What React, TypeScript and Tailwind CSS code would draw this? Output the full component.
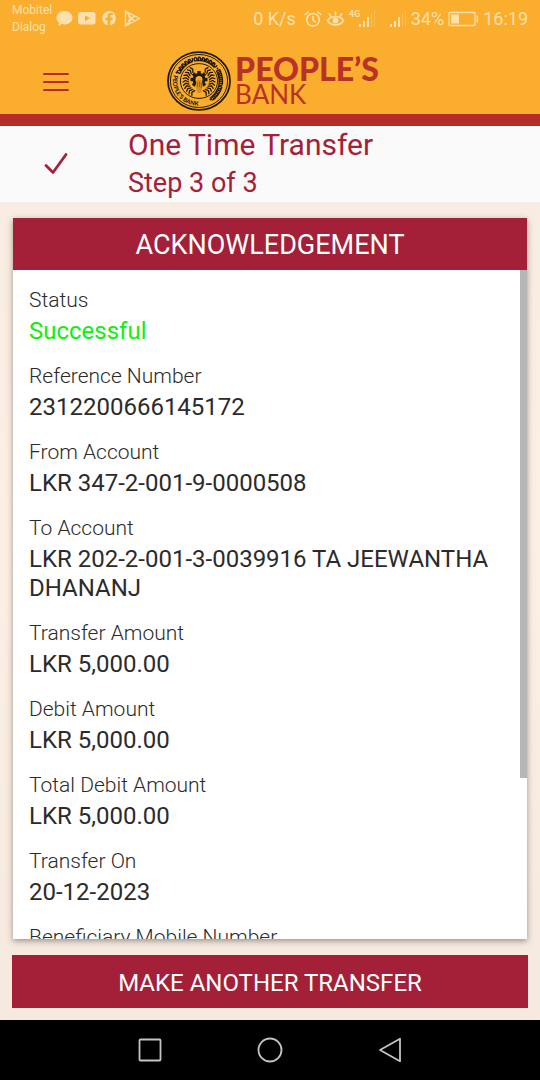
import React from "react";

type Entry = { label: string; value?: string; tone?: "success" };

const entries: Entry[] = [
  { label: "Status", value: "Successful", tone: "success" },
  { label: "Reference Number", value: "2312200666145172" },
  { label: "From Account", value: "LKR 347-2-001-9-0000508" },
  { label: "To Account", value: "LKR 202-2-001-3-0039916 TA JEEWANTHA DHANANJ" },
  { label: "Transfer Amount", value: "LKR 5,000.00" },
  { label: "Debit Amount", value: "LKR 5,000.00" },
  { label: "Total Debit Amount", value: "LKR 5,000.00" },
  { label: "Transfer On", value: "20-12-2023" },
  { label: "Beneficiary Mobile Number" },
];

function NotificationIcons() {
  return (
    <svg width="86" height="20" viewBox="0 0 86 20" aria-hidden="true">
      <g fill="currentColor">
        <path d="M8.500 2C13.200 2 16.500 4.900 16.500 8.700S13.200 15.400 8.500 15.400C7.500 15.400 6.600 15.300 5.800 15L2.400 17L3 13.600C1.400 12.400 0.500 10.700 0.500 8.700C0.500 4.900 3.800 2 8.500 2Z" />
        <path fillRule="evenodd" d="M24.500 3H37Q39.500 3 39.500 5.500V13Q39.500 15.500 37 15.500H24.500Q22 15.500 22 13V5.500Q22 3 24.500 3ZM29 6.300V12.200L34 9.250Z" />
        <path d="M53.500 2a7.300 7.300 0 0 0-2 14.300v-5h-2V8.800h2V7.500c0-2.500 1.300-3.600 3.400-3.600l2 .2v2h-1.200c-1 0-1.400.5-1.400 1.400v1.300h2.500l-.4 2.500h-2.100v5A7.300 7.300 0 0 0 53.500 2Z" />
      </g>
      <path d="M69.500 2L83.500 9.500L69.500 17ZM69.500 2L78.500 12.200M69.500 17L78.500 6.800M72.500 7L74.500 9.500L72.500 12" fill="none" stroke="currentColor" strokeWidth="1.400" strokeLinejoin="round" />
    </svg>
  );
}

function AlarmIcon() {
  return (
    <svg width="18" height="18" viewBox="0 0 18 18" fill="none" stroke="currentColor" strokeWidth="1.600" strokeLinecap="round" aria-hidden="true">
      <circle cx="9" cy="9.800" r="6.300" />
      <path d="M9 6.300V10L11.500 12M1.200 4.500L4.300 1.800M16.800 4.500L13.700 1.800" />
    </svg>
  );
}

function EyeIcon() {
  return (
    <svg width="19" height="18" viewBox="0 0 19 18" fill="none" stroke="currentColor" strokeWidth="1.700" strokeLinecap="round" aria-hidden="true">
      <path d="M1.500 10.500C4.500 5.500 14.500 5.500 17.500 10.500C14.500 16.300 4.500 16.300 1.500 10.500ZM9.500 2V5M3.300 3.800L4.800 6.200M15.700 3.800L14.200 6.200" />
      <circle cx="9.500" cy="10.600" r="2" fill="currentColor" />
    </svg>
  );
}

function SignalBars() {
  return (
    <>
      <path d="M10 14h2v3h-2zM14 11h2v6h-2zM18 7h2v10h-2z" />
      <path opacity=".35" d="M22 3h1v14h-1zM25 1h1v16h-1z" />
    </>
  );
}

function BatteryIcon() {
  return (
    <svg width="31" height="16" viewBox="0 0 31 16" aria-hidden="true">
      <rect x="1" y="1.500" width="26" height="13" rx="1" fill="none" stroke="currentColor" strokeWidth="1.300" />
      <path d="M3 3.500h8v9H3zM28.500 4.500H30v7h-1.500z" fill="currentColor" />
    </svg>
  );
}

const teeth = [0, 45, 90, 135, 180, 225, 270, 315];
const leaves = [-60, -48, -36, -24, -12, 0, 12, 24, 36, 48, 60];

function Emblem() {
  return (
    <svg width="64" height="60" viewBox="0 0 64 60" aria-hidden="true">
      <defs>
        <path id="ring-bottom" d="M6.800 24A25.600 24.200 0 0 0 45 51" />
      </defs>
      <g fill="none" stroke="#21190b">
        <ellipse cx="32" cy="30" rx="31" ry="28.800" strokeWidth="1.800" />
        <ellipse cx="32" cy="30" rx="28.600" ry="26.500" strokeWidth="1" />
        <ellipse cx="32" cy="30" rx="18.600" ry="17.400" strokeWidth="1" />
      </g>
      <g fill="none" stroke="#21190b" strokeWidth="1.300" strokeLinecap="round">
        {leaves.map((a) => (
          <g key={a}>
            <path transform={`rotate(${a} 32 30)`} d="M16 31L18.500 29.500L21.500 31" />
            <path transform={`rotate(${a} 32 30)`} d="M48 31L45.500 29.500L42.500 31" />
          </g>
        ))}
      </g>
      <circle cx="32" cy="28.500" r="5" fill="none" stroke="#21190b" strokeWidth="3" />
      <g fill="#21190b">
        {teeth.map((a) => (
          <rect key={a} x="30.300" y="20" width="3.400" height="4" transform={`rotate(${a} 32 28.500)`} />
        ))}
      </g>
      <path d="M29.500 29.500Q32 27.500 35 29.500L35.800 35L34 42H30.500L28.500 34.500Z" fill="#d9901f" />
      <path d="M30.500 31V36M32.500 30.500V36M34.300 31.500V37" stroke="#6d4510" strokeWidth=".6" />
      <text fill="#21190b" className="font-['Lato',sans-serif] text-[6px] font-black">
        <textPath href="#ring-bottom">PEOPLE’S BANK</textPath>
      </text>
      <g fill="none" stroke="#21190b" strokeWidth="1.300" strokeLinecap="round">
        {[-62, -52, -42, -32, -22, -6, 4, 14, 24, 34, 44].map((a) => (
          <path key={a} transform={`rotate(${a} 32 30)`} d="M29.800 9.500C28.500 6.200 31.500 5.200 32 7.500C32 9.800 34.800 9.500 34.200 6.500M30 9.600H33" />
        ))}
        {[66, 76, 86, 96, 110, 120, 130, 140].map((a) => (
          <path key={a} transform={`rotate(${a} 32 30)`} d="M30 6.500V9.800H34V7M32 6.500V9.500M30 6.500H33" />
        ))}
      </g>
      <g fill="#21190b">
        <circle cx="9.500" cy="21.500" r="0.900" />
        <circle cx="50.500" cy="17.500" r="0.900" />
        <circle cx="43.500" cy="48.500" r="0.900" />
      </g>
    </svg>
  );
}

export default function App() {
  return (
    <div className="flex h-screen flex-col bg-linear-to-b from-[#f7eae0] via-[#fcf0e6] to-[#f5e8de] font-['Roboto',sans-serif] text-[#2b2b2b]">
      <header className="shrink-0 border-b-12 border-[#b52d27] bg-[#fbad2d]">
        <div className="flex h-[38px] items-center justify-between px-3 text-[#fde0ae]">
          <div className="flex items-center gap-1">
            <div className="text-[12px] leading-[17px]">
              <div>Mobitel</div>
              <div>Dialog</div>
            </div>
            <NotificationIcons />
          </div>
          <div className="flex items-center gap-1 text-[18px] leading-[22px]">
            <span className="pr-1">0 K/s</span>
            <AlarmIcon />
            <EyeIcon />
            <svg width="28" height="18" viewBox="0 0 28 18" fill="currentColor" aria-hidden="true">
              <text x="0" y="7" className="text-[9px] font-bold">4G</text>
              <SignalBars />
            </svg>
            <svg className="ml-2" width="18" height="18" viewBox="9 0 18 18" fill="currentColor" aria-hidden="true">
              <SignalBars />
            </svg>
            <span>34%</span>
            <BatteryIcon />
            <span>16:19</span>
          </div>
        </div>
        <div className="grid h-[76px] grid-cols-[112px_1fr_112px] items-center pt-2">
          <button type="button" aria-label="Menu" className="flex h-full items-center justify-center pt-1 text-[#b3272b]">
            <svg width="26" height="20" viewBox="0 0 26 20" fill="none" stroke="currentColor" strokeWidth="1.800" strokeLinecap="round" aria-hidden="true">
              <path d="M1 2H25M1 10H25M1 18H25" />
            </svg>
          </button>
          <div className="flex items-center justify-center gap-1 pt-[2px] pl-[6px]">
            <Emblem />
            <div className="font-['Lato',sans-serif] text-[#b83228]">
              <div className="text-[32px] leading-[26px] font-black">PEOPLE’S</div>
              <div className="text-[26px] leading-[24px]">BANK</div>
            </div>
          </div>
        </div>
      </header>

      <section className="grid h-[76px] shrink-0 grid-cols-[112px_1fr] items-center bg-[#fafafa] text-[#a62038]">
        <svg className="justify-self-center" width="26" height="24" viewBox="0 0 26 24" fill="none" stroke="currentColor" strokeWidth="2.800" strokeLinecap="round" strokeLinejoin="round" aria-hidden="true">
          <path d="M3 13.500L10 20.500L23 2.500" />
        </svg>
        <div className="pl-4">
          <h1 className="text-[30px] leading-[38px]">One Time Transfer</h1>
          <p className="text-[27px] leading-[38px]">Step 3 of 3</p>
        </div>
      </section>

      <main className="flex min-h-0 flex-1 flex-col gap-4 px-3 pt-4 pb-3">
        <section className="mx-px flex min-h-0 flex-1 flex-col bg-white shadow-[0_2px_6px_rgba(70,50,40,0.5)]">
          <h2 className="shrink-0 bg-[#a32038] pt-[2px] text-center text-[27px] leading-[50px] text-white">ACKNOWLEDGEMENT</h2>
          <div className="relative min-h-0 flex-1">
            <dl className="flex h-full flex-col gap-[17px] overflow-y-auto px-4 pt-[17px] [scrollbar-width:none]">
              {entries.map((entry) => (
                <div key={entry.label} className="flex shrink-0 flex-col gap-1">
                  <dt className="text-[21px] leading-[26px] font-light">{entry.label}</dt>
                  {entry.value && (
                    <dd className={entry.tone === "success" ? "text-[24px] leading-[29px] text-[#0df00d]" : "text-[24px] leading-[29px]"}>
                      {entry.value}
                    </dd>
                  )}
                </div>
              ))}
            </dl>
            <div className="absolute top-0 right-0 h-[76%] w-[7px] bg-[#b8b6b5]" />
          </div>
        </section>
        <button type="button" className="shrink-0 bg-[#a32038] pt-[3px] text-center text-[24px] leading-[50px] text-white">
          MAKE ANOTHER TRANSFER
        </button>
      </main>

      <nav className="flex h-[60px] shrink-0 items-center justify-center gap-[92px] bg-black text-[#c4c4c4]">
        <button type="button" aria-label="Recent apps">
          <svg width="28" height="28" viewBox="0 0 28 28" fill="none" stroke="currentColor" strokeWidth="1.800" aria-hidden="true">
            <rect x="3.500" y="3.500" width="21" height="21" rx="1" />
          </svg>
        </button>
        <button type="button" aria-label="Home">
          <svg width="28" height="28" viewBox="0 0 28 28" fill="none" stroke="currentColor" strokeWidth="1.800" aria-hidden="true">
            <circle cx="14" cy="14" r="11.500" />
          </svg>
        </button>
        <button type="button" aria-label="Back">
          <svg width="28" height="28" viewBox="0 0 28 28" fill="none" stroke="currentColor" strokeWidth="1.800" strokeLinejoin="round" aria-hidden="true">
            <path d="M24 2.800V25.200L4 14Z" />
          </svg>
        </button>
      </nav>
    </div>
  );
}
